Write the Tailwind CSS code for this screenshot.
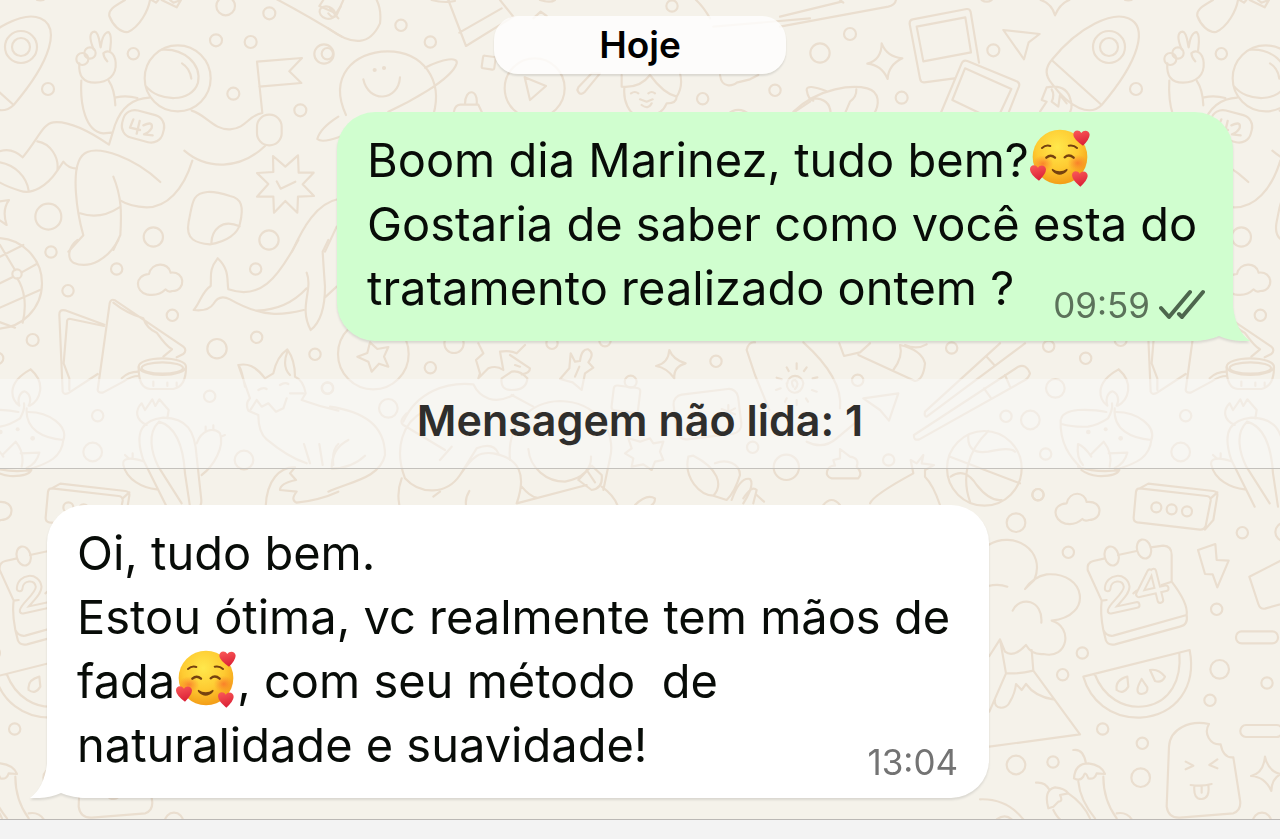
<!DOCTYPE html>
<html lang="pt-BR">
<head>
<meta charset="utf-8">
<meta name="viewport" content="width=device-width, initial-scale=1">
<title>Conversa</title>
<script src="https://cdn.jsdelivr.net/npm/@tailwindcss/browser@4"></script>
</head>
<body class="bg-[#f5f2ea] font-['Inter',sans-serif] text-[#080c08]">
<div class="relative isolate flex min-h-screen flex-col overflow-hidden">

<!-- Doodle wallpaper; the tile repeats every 1088 units -->
<svg class="absolute inset-0 -z-10 h-full w-full" viewBox="0 0 1280 839" preserveAspectRatio="xMidYMid slice" fill="none" stroke="#eadecf" stroke-width="6.5" stroke-linecap="round" stroke-linejoin="round" aria-hidden="true">
<defs>
<g id="tile">
<!-- astronaut, flag, badge -->
<g transform="scale(.33333)">
<path d="M375 0C340 20 325 30 328 48C338 75 360 98 384 96C420 80 445 30 450 0M455 0L468 8L475 0M485 0L530 22L543 0L520 8L510 0"/>
<circle cx="677" cy="18" r="28"/><circle cx="808" cy="40" r="18"/><circle cx="648" cy="121" r="18"/><circle cx="752" cy="126" r="18"/><circle cx="972" cy="162" r="29"/><circle cx="400" cy="161" r="17"/><circle cx="700" cy="281" r="18"/><circle cx="901" cy="331" r="18"/><circle cx="145" cy="650" r="39"/><circle cx="460" cy="711" r="29"/><circle cx="807" cy="720" r="29"/><circle cx="144" cy="267" r="18"/>
<path d="M825-5Q920 45 1025 110M958 18L1008 40M970 0L958 18M1008 40L1022 20"/><ellipse cx="982" cy="38" rx="24" ry="18" transform="rotate(20 982 38)"/>
<path d="M281 148C268 118 267 96 284 95C298 98 298 130 302 142C305 120 310 97 326 96C338 108 332 135 330 152M310 160C325 145 345 160 347 188C350 225 325 248 285 248C250 248 235 228 238 190M310 160Q312 175 322 184"/><circle cx="247" cy="177" r="18"/><circle cx="270" cy="159" r="17"/>
<path d="M244 242C240 310 255 395 310 400L334 398M326 242Q344 268 346 316M348 292Q380 285 412 294M448 293C400 295 365 320 345 375L327 434C270 395 205 362 160 367C130 370 115 415 68 472Q35 440-5 455"/>
<circle cx="533" cy="235" r="99"/><path d="M487 149C550 145 605 190 594 248C575 310 475 305 439 260M546 190Q570 205 574 236"/>
<rect x="366" y="337" width="126" height="84" rx="36" transform="rotate(15 429 379)"/>
<path stroke-width="7" d="M400 358L390 383L420 390M419 363L410 401M430 376Q460 362 455 384Q448 397 432 403L458 406"/>
<path d="M575 332C620 345 640 390 690 388C740 385 745 345 787 339M787 339L771 185L906 174L868 214L904 249L778 260"/><rect x="771" y="344" width="74" height="92" rx="36"/>
<path d="M795 438C720 510 620 510 553 452M577 482C550 570 500 622 440 622Q390 620 362 602M481 546C400 470 300 440 262 456C225 470 225 540 228 580C232 640 240 670 250 706L205 755M340 530C365 590 365 640 361 705L340 750M240 640Q300 660 358 622"/>
<path d="M112 424C150 430 178 470 172 512L190 485Q205 505 230 506M172 512C140 560 95 585 60 572Q20 560-5 545M0 487C45 495 80 530 86 572M-5 605L27 600Q5 630 20 675L-5 658"/>
<path d="M819 468L856 500L894 466L896 518L941 518L908 553L942 588L894 590L892 638L856 603L822 638L820 590L771 590L805 552L771 519L820 516ZM830 544L842 566L886 545"/>
<path d="M622 576C575 580 578 610 566 665C555 720 590 730 630 733C680 725 715 700 720 670C732 620 725 595 690 588C665 580 645 574 622 576ZM634 730C635 690 665 655 719 679"/>
<path d="M1015 350Q960 385 952 417Q965 430 1020 410M876 755C910 680 950 610 1015 597M975 755L1010 680"/>
</g>
<!-- ball, sandwich, cloud, whale, candle, cactus, fox -->
<g transform="translate(0 240) scale(.33333)">
<circle cx="-10" cy="130" r="136"/><path d="M0 15L45 90M0 50L70 15M65 97L110 72M0 130L40 110M52 115C75 150 80 200 68 248M-5 205L120 150M-5 245L45 263"/><circle cx="51" cy="102" r="14"/>
<circle cx="153" cy="36" r="17"/><circle cx="204" cy="152" r="17"/><circle cx="98" cy="300" r="18"/><circle cx="350" cy="87" r="17"/><circle cx="517" cy="226" r="17"/><circle cx="651" cy="326" r="29"/><circle cx="770" cy="292" r="17"/><circle cx="767" cy="87" r="17"/><circle cx="945" cy="343" r="17"/><circle cx="983" cy="444" r="17"/><circle cx="629" cy="469" r="17"/><circle cx="293" cy="527" r="17"/><circle cx="278" cy="636" r="28"/><circle cx="732" cy="660" r="28"/>
<path d="M232 0C205 20 200 55 220 68C270 90 325 55 355 0"/>
<path d="M440 163C405 155 403 105 447 102C455 65 505 65 512 98C555 92 560 152 517 153Q505 158 497 148Q475 170 440 163Z"/>
<path d="M313 254L195 211Q177 207 178 225L188 455Q192 465 204 460L293 402M312 258L212 237Q200 235 201 248L191 370L208 415V450M293 450L329 190Q332 175 345 181L550 320Q562 330 550 342L530 352M340 188Q380 220 430 235Q440 265 470 278Q500 320 516 328L490 350M293 450Q295 460 310 457L370 425Q395 408 415 408M365 415Q385 395 415 395"/>
<ellipse cx="487" cy="380" rx="71" ry="25"/><ellipse cx="487" cy="384" rx="62" ry="17"/><path d="M416 382Q415 445 450 447H520Q558 440 558 382M460 425V438M502 428V438M530 428V438"/>
<path d="M653 55C625 90 635 110 632 138C605 155 600 190 581 210Q625 215 640 192C655 165 675 170 690 178C790 235 850 225 911 210M653 55C690 90 680 120 685 148C780 180 830 120 895 0M770 212Q860 210 920 145M920 98C940 150 895 200 932 270C970 240 975 180 975 140Q970 70 968 35L985 0M975 172L1010 140"/>
<path d="M92 388C140 430 120 480 90 497M92 388C15 430 35 480 58 497M58 497C50 470 65 455 73 454C90 460 95 480 86 497M72 490Q75 510 60 535Q30 555 0 560Q-45 562-80 552M-80 535Q-75 515-30 510Q20 508 55 516M80 505C75 570 130 595 190 600C205 560 150 515 82 516M190 600C185 650 150 670 80 690M-82 540C-85 610-55 650-20 685M7 645L47 605Q75 640 65 680M62 640L118 638Q110 670 80 684M-30 612Q-10 620 10 650M-30 612Q-35 655-15 675M-30 680Q30 700 94 690Q85 710 30 708Q0 705-20 690"/>
<g fill="#eadecf" stroke="none"><circle cx="53" cy="568" r="6"/><circle cx="98" cy="595" r="7"/><circle cx="1" cy="576" r="7"/></g>
<path d="M440 555C405 540 405 510 425 490L435 510L457 478L466 498L478 478L506 510L502 535M500 800L430 660C400 570 430 540 490 533C560 535 585 570 590 650L604 780Q605 795 595 805M477 545C440 580 455 640 475 680L545 790M477 545C530 560 550 620 555 700L570 800M590 610C605 570 640 560 660 580C675 620 640 680 605 705M617 572V560M640 568V556M662 590L675 585M470 748C430 745 380 720 370 675C365 655 390 650 430 664M386 655L375 645M398 653V640"/>
<path d="M775 525L745 512Q735 490 750 475L715 375C740 370 765 375 795 415L820 400Q830 350 862 328Q885 360 885 410Q910 420 917 460L905 480Q960 500 1015 512M735 440Q725 390 718 380M870 405Q845 380 862 335M750 512L770 480L785 500L805 490L828 515L850 505L860 475M775 450Q790 440 800 447M840 435Q855 425 865 432M870 460H910M775 525C775 570 790 590 800 598C850 640 890 660 920 670M912 612L930 670M958 612L968 675M1015 612Q995 630 1000 675M797 800C800 720 840 680 885 682L870 700L888 720Q840 730 840 750L890 755Q870 780 890 788Q960 780 1015 755"/>
</g>
<!-- hand, hat, planet, record, face -->
<g transform="translate(330) scale(.33333)">
<path d="M0 25L25 55M-5 40Q10 60 20 45L40 0M-5 85C70 140 120 135 150 70Q155 30 140 0M355 0L408 138L550 50L510 0M388 98L515 25M305 0Q340 10 375 3M630 0Q660 10 675 0M1098 0Q1120 20 1140 55M610 55L632 35L650 48"/>
<circle cx="213" cy="76" r="17"/><circle cx="301" cy="126" r="17"/><circle cx="1026" cy="18" r="17"/><circle cx="1118" cy="296" r="17"/><circle cx="1335" cy="271" r="17"/><circle cx="-8" cy="161" r="17"/>
<path d="M48 345C-5 230 70 155 173 154C280 155 340 240 310 345M285 203C340 175 385 170 380 190C365 240 230 310 175 335M100 238C115 310 205 305 210 232"/><circle cx="134" cy="210" r="3"/><circle cx="162" cy="204" r="3"/>
<rect x="457" y="169" width="38" height="38" rx="5" transform="rotate(8 476 188)"/><circle cx="614" cy="265" r="90"/><path d="M584 232L648 258L600 300ZM745 262L785 220H810L765 275Q750 290 742 270ZM372 335Q375 315 390 314H445L455 335M405 312C405 265 445 265 440 312"/>
<path d="M875 225V260Q930 265 960 225Q1000 280 1040 290Q1040 310 1010 310Q995 345 960 345M1040 290Q1060 260 1050 220M883 265C880 300 895 345 930 350M903 280Q915 272 925 280M955 280Q965 272 975 280M930 298L950 305L968 298M935 315Q955 330 965 310M1170 225C1175 270 1215 255 1220 248L1260 238L1285 225M1190 345Q1225 315 1260 345M1395 335L1440 305M1150 80L1440 55"/>
</g>
<!-- polaroids, plane, rocket -->
<g transform="translate(780) scale(.33333)">
<path d="M0 50L185 5M0 80L325 20Q345 15 348 0M180 0L190 8M605 0Q620 10 635 0M782 0Q815 10 825 46Q840 10 868 0M1035 0Q1045 2 1055 0"/>
<circle cx="120" cy="159" r="29"/><circle cx="210" cy="102" r="18"/><circle cx="365" cy="293" r="18"/><circle cx="640" cy="151" r="18"/>
<path d="M305 130Q320 170 367 175Q325 195 323 237Q305 195 262 191Q305 180 305 130ZM398 58L560 27Q570 26 572 36L597 188M523 235L433 247Q422 248 420 236L389 72Q388 60 398 58M410 80L556 52L573 157L430 184ZM480 345L545 190Q550 178 562 183L708 243Q721 248 717 259L685 340M555 205L694 267L660 340M555 205L517 300L600 340"/>
<path d="M670 90L779 102L746 127L732 178Z"/>
<path d="M40 335C120 260 220 255 262 265C300 275 300 315 280 345M80 270Q80 250 140 274M80 270Q85 300 100 302M100 295Q150 295 152 340M229 268Q230 290 210 305L195 340"/>
<path d="M815 180C900 75 1000 35 1045 55C1105 80 1080 180 965 315C930 350 870 325 815 250Q785 215 815 180ZM815 180L965 315M800 262L785 300L800 305L780 335M800 262Q860 250 872 300Q880 325 865 345M815 268Q825 285 815 305L835 320L840 285L860 310"/><circle cx="987" cy="141" r="48"/><circle cx="987" cy="141" r="27"/>
</g>
<!-- star, horse, smiling ball, shell, sun card -->
<g transform="translate(330 335) scale(.33333)">
<circle cx="130" cy="57" r="106"/><path d="M120 22L142 42L175 36L162 65L175 95L147 86L125 110L115 80L82 65L112 54Z"/>
<circle cx="301" cy="98" r="17"/><circle cx="372" cy="25" r="29"/><circle cx="175" cy="220" r="28"/><circle cx="666" cy="25" r="17"/><circle cx="825" cy="17" r="17"/><circle cx="1158" cy="79" r="17"/><circle cx="1268" cy="337" r="17"/><circle cx="1369" cy="397" r="38"/><circle cx="-8" cy="160" r="17"/>
<path d="M445 25L460 55L438 75L450 115L445 130L475 100Q500 90 520 105L510 50Q540 45 560 55L585 30M540 60L600 100Q600 115 575 118M555 90L570 95M515 130Q510 165 545 165Q590 165 592 130Q570 105 545 110ZM220 260C260 170 350 140 430 148M430 148C450 190 495 210 550 180M545 180L610 215"/>
<path d="M722 55L735 80L750 78Q755 40 775 43Q795 55 775 82L790 98L765 115L755 165L728 142L690 132L718 100ZM735 125L748 95M1018 45Q1030 75 1067 85Q1030 95 1033 130Q1010 98 978 93Q1015 85 1018 45Z"/>
<rect x="848" y="155" width="80" height="75" rx="10" transform="rotate(7 888 190)"/><circle cx="902" cy="140" r="18"/><rect x="1035" y="170" width="195" height="135" rx="28" transform="rotate(-7 1132 238)"/><path d="M1195 210V250M1175 222L1215 238M1215 220L1175 242"/>
<path d="M0 215C100 230 165 270 165 360C150 430 60 440-5 470M5 400Q5 340 55 315M5 400Q65 400 105 362M230 235Q205 260 220 270L345 345M330 375L365 335M225 430C190 340 220 260 280 230M215 430Q200 470 208 510M225 430C270 480 350 480 390 420C430 360 450 350 490 355C570 370 590 420 560 505M390 420L440 340Q490 320 505 355M310 485L330 470M418 468Q405 490 408 510M575 455Q600 485 620 488M560 505L770 450M815 455Q850 480 862 510"/>
<path d="M540 375C530 270 600 200 690 198C800 200 860 290 840 370L820 465M595 342C600 400 650 440 705 440C760 430 785 400 783 365M745 435L785 392L815 420Q820 460 785 465ZM770 405L795 442"/>
<path d="M885 355L905 340L895 310L930 320L960 310L970 325L1000 320L990 350L1000 375L975 380L965 405L940 388L905 395L910 370ZM1075 365C1060 430 1110 480 1150 482C1180 450 1165 400 1090 362ZM1155 385C1190 370 1230 385 1230 420Q1215 470 1190 495L1150 482M1205 495Q1230 425 1260 432Q1275 450 1240 505M1240 490Q1265 450 1280 465L1270 505M1280 480L1302 500M915 510Q950 475 975 490Q975 505 965 510"/>
<path d="M1250 45Q1255 20 1275 22M1250 45L1275 120L1318 225M1372 145C1375 115 1415 115 1420 145C1415 185 1370 180 1370 145M1390 155Q1380 135 1395 135Q1410 145 1395 162M1400 85V102M1370 97L1376 108M1430 97L1422 108M1340 128L1355 133M1338 165L1352 160M1365 200L1370 190M1400 210V195M1448 130L1462 127M1446 165L1460 170M1434 200L1428 190"/>
</g>
<!-- chopsticks, arrow, basketball, stickman -->
<g transform="translate(780 335) scale(.33333)">
<path d="M70 22Q190 130 180 220M178 25L192 63L240 52L270 25M235 60L405 138Q430 135 435 85Q425 45 360 30M340 105Q370 65 360 30M375 30Q410 45 440 28"/>
<circle cx="233" cy="136" r="17"/><circle cx="515" cy="39" r="17"/><circle cx="806" cy="34" r="17"/><circle cx="917" cy="70" r="17"/><circle cx="826" cy="160" r="28"/><circle cx="751" cy="255" r="28"/><circle cx="678" cy="244" r="17"/><circle cx="797" cy="357" r="17"/><circle cx="326" cy="375" r="17"/><circle cx="774" cy="479" r="17"/>
<path d="M435 230L660 25M440 245L735 25M435 230Q432 245 440 245M620 65L645 92M402 300L715 95Q738 85 750 115Q745 130 735 135L418 313Q400 318 402 300M612 160L632 188M675 120L690 155M250 190L355 175L327 257L300 225Z"/>
<circle cx="613" cy="400" r="112"/><path d="M510 365L720 445M625 288C560 350 545 430 570 500M565 300Q560 360 625 350Q690 335 705 350M512 425Q555 395 590 450Q630 500 665 495"/>
<path d="M155 430C130 425 140 390 165 392L160 375L180 370V342L210 365Q240 370 230 395Q250 415 235 430ZM270 505Q280 480 400 415L392 375L410 385L430 360L425 385L462 390L435 405V425Q460 450 480 510M130 510Q155 480 180 510M80 320Q130 345 170 310L230 260"/>
</g>
<!-- speech box, volcano, calendar, melon, popsicle, chillies -->
<g transform="translate(980 480) scale(.33333)">
<circle cx="174" cy="44" r="17"/><circle cx="108" cy="128" r="28"/><circle cx="265" cy="217" r="17"/><circle cx="307" cy="519" r="17"/><circle cx="248" cy="584" r="17"/><circle cx="368" cy="747" r="17"/><circle cx="487" cy="790" r="17"/><circle cx="482" cy="893" r="28"/><circle cx="219" cy="846" r="17"/><circle cx="108" cy="855" r="28"/><circle cx="787" cy="158" r="17"/><circle cx="914" cy="156" r="28"/><circle cx="710" cy="388" r="17"/><circle cx="719" cy="568" r="28"/><circle cx="690" cy="661" r="17"/><circle cx="861" cy="609" r="17"/><circle cx="846" cy="1026" r="28"/>
<path d="M256 131C217 120 215 72 260 70C270 30 315 35 320 66C370 60 370 120 327 120Q315 125 307 117Q285 137 256 131ZM479 25L680 48Q693 50 692 62L677 138Q672 150 660 149L472 127Q460 125 461 112L468 35Q470 25 479 25L505 11L700 33Q714 35 712 47L700 120L675 149M692 55L712 37"/>
<circle cx="529" cy="82" r="15"/><circle cx="575" cy="88" r="15"/><circle cx="621" cy="94" r="15"/>
<path d="M25 195C100 150 200 210 163 300L135 327Q160 290 200 283C320 275 340 410 215 422C280 440 265 540 190 522Q155 525 138 495Q100 535 75 515L60 478L28 528M25 318Q55 310 82 320M98 392C120 345 190 360 184 428M60 478L78 580Q120 582 160 572L155 510M78 580L28 695M160 572L300 763L28 800M45 660C40 690 80 690 90 665Q105 640 108 612L125 630L138 612Q165 650 220 658"/>
<path d="M375 235L340 243Q320 248 323 270L365 362M414 225L470 213M512 202L550 197Q575 198 575 225V305Q625 370 620 405L400 467Q380 470 370 450Q360 400 365 362L380 360M460 340L470 332M545 315L575 305M370 450L378 482Q385 497 405 493L600 440Q625 435 620 405"/><ellipse cx="395" cy="228" rx="21" ry="29" transform="rotate(-15 395 228)"/><ellipse cx="492" cy="207" rx="21" ry="29" transform="rotate(-15 492 207)"/>
<path stroke-width="23" d="M383 325C385 290 435 285 440 320C440 345 395 375 392 392L470 375M510 277L477 343L557 325M520 275L541 360"/>
<path stroke="#f5f2ea" stroke-width="11" d="M383 325C385 290 435 285 440 320C440 345 395 375 392 392L470 375M510 277L477 343L557 325M520 275L541 360"/>
<path d="M310 590L629 510C650 620 590 705 480 713C390 715 330 660 310 590ZM344 582C370 650 430 690 500 678C570 665 605 600 598 520M442 590Q405 600 410 630Q430 645 445 620ZM485 597Q460 640 485 642Q505 640 502 622ZM510 570Q535 565 555 590Q545 610 525 603Z"/>
<path d="M654 210L706 192L710 240L746 242L712 322L698 283L675 282ZM808 290L910 238L980 350L855 386Q840 388 835 372Z"/><rect x="768" y="454" width="126" height="36" rx="17"/><rect x="781" y="735" width="126" height="36" rx="17"/>
<path d="M687 732C630 720 570 745 567 800L560 980Q565 1015 600 1013L760 1000Q785 990 780 960L760 832Q730 835 722 793C690 795 670 760 687 732ZM617 845L640 857L617 868M712 838L688 855L712 865M632 915Q665 920 695 912M643 918Q640 958 665 957Q690 955 685 916M665 920V938M855 830Q865 875 903 882Q875 895 874 933Q855 890 813 888Q850 880 855 830Z"/>
<path d="M280 810Q310 805 318 850M282 895Q285 850 325 850Q365 855 375 882L350 880Q345 900 325 895Q315 870 310 890Q300 905 282 895M295 905Q300 960 345 1015M370 890Q370 960 410 1015M168 908Q195 905 207 928M205 985Q190 930 225 922Q255 925 265 940L240 945Q250 965 235 965L220 980ZM220 990Q230 1010 240 1018M265 940Q310 970 330 1015M410 1000Q440 995 455 1018M0 958Q80 955 130 1018M50 1018Q75 1000 95 1018"/>
</g>
</g>
</defs>
<use href="#tile"/><use href="#tile" x="-1088"/><use href="#tile" x="1088"/>
</svg>

<!-- Reusable face with three hearts -->
<svg class="absolute h-0 w-0" aria-hidden="true"><defs>
<radialGradient id="skin" cx=".45" cy=".32" r=".7"><stop offset="0" stop-color="#ffe84c"/><stop offset=".55" stop-color="#fecb32"/><stop offset="1" stop-color="#f39a15"/></radialGradient>
<radialGradient id="blush"><stop offset="0" stop-color="#f9602a" stop-opacity=".65"/><stop offset="1" stop-color="#f9702a" stop-opacity="0"/></radialGradient>
<linearGradient id="red" x2=".3" y2="1"><stop offset="0" stop-color="#fb5a58"/><stop offset="1" stop-color="#dc2338"/></linearGradient>
<symbol id="loved" viewBox="24 30 186 180">
<circle cx="117" cy="117" r="82" fill="url(#skin)"/>
<ellipse cx="66" cy="137" rx="31" ry="25" fill="url(#blush)"/><ellipse cx="170" cy="135" rx="30" ry="25" fill="url(#blush)"/>
<g fill="none" stroke="#76420f" stroke-width="6" stroke-linecap="round"><path d="M63 90Q74 80 88 84M143 83Q158 80 168 90"/><path stroke-width="7" d="M76 119Q89 107 102 119M131 118Q144 107 158 119"/></g>
<path d="M94 152Q116 167 138 152Q142 154 138 159Q116 182 94 159Q90 154 94 152Z" fill="#76420f"/>
<g fill="url(#red)"><path d="M186 83Q158 64 157 51C156 36 174 33 181 45C188 34 205 37 206 50Q205 64 186 83Z"/><path d="M54 188Q28 169 27 155C26 140 43 137 51 149C57 138 74 141 75 154Q75 168 54 188Z"/><path d="M178 206Q154 187 153 172C153 158 170 156 176 167C184 156 200 160 200 174Q199 187 178 206Z"/></g>
</symbol>
</defs></svg>

<main class="flex flex-1 flex-col pt-4">
  <time class="mx-auto flex h-[58px] w-[292px] items-center justify-center rounded-3xl bg-white/80 text-[37px] font-semibold text-black shadow-[0_2px_2px_#0000001c]">Hoje</time>

  <article class="relative mt-[38px] mr-[47px] w-[70%] self-end rounded-[38px] bg-[#d0fecf] px-[30px] pt-4 pb-[21px] drop-shadow-[0_2px_1px_#0000001c]">
    <svg class="absolute -right-[17px] bottom-0 h-[60px] w-[60px]" viewBox="0 0 60 60" aria-hidden="true"><path d="M43 0V26Q46 50 60 60Q43 61 29 55Q18 60 0 60V0Z" fill="#d0fecf"/></svg>
    <p class="relative text-[47px] leading-[64px] whitespace-nowrap">Boom dia Marinez, tudo bem?<svg class="inline-block h-[60px] w-[62px] align-[-11px]" role="img" aria-label="Rosto sorridente com corações"><use href="#loved"/></svg><br>Gostaria de saber como você esta do<br>tratamento realizado ontem ?</p>
    <div class="absolute right-7 bottom-3 flex items-center gap-[9px] text-[35px] leading-12 text-[#5b725a]"><time>09:59</time>
      <svg class="h-8 w-[46px]" viewBox="0 0 46 32" fill="none" stroke="#4d664d" stroke-width="4" stroke-linecap="round" stroke-linejoin="round" role="img" aria-label="Entregue"><path d="M2 19L10 28L31 3M20 25L23 28L44 3"/></svg></div>
  </article>

  <div class="mt-[38px] flex h-[90px] items-center justify-center border-b border-[#c4c1bc] bg-[#fafafa]/50 pb-1.5 text-[43px] font-semibold text-[#2f2e2c]" role="separator">Mensagem não lida: 1</div>

  <article class="relative mt-9 ml-[47px] w-[73.6%] rounded-[38px] bg-white px-[30px] pt-4 pb-[21px] drop-shadow-[0_2px_1px_#0000001c]">
    <svg class="absolute bottom-0 -left-[17px] h-[60px] w-[60px]" viewBox="0 0 60 60" aria-hidden="true"><path d="M17 0V26Q14 50 0 60Q17 61 31 55Q42 60 60 60V0Z" fill="#fff"/></svg>
    <p class="relative text-[47px] leading-[64px] whitespace-nowrap">Oi, tudo bem.<br>Estou ótima, vc realmente tem mãos de<br>fada<svg class="inline-block h-[60px] w-[62px] align-[-11px]" role="img" aria-label="Rosto sorridente com corações"><use href="#loved"/></svg>, com seu método&nbsp; de<br>naturalidade e suavidade!</p>
    <time class="absolute right-[31px] bottom-3 text-[35px] leading-12 text-[#737373]">13:04</time>
  </article>
</main>
<footer class="h-5 border-t border-[#bbb8b5] bg-[#f3f3f3]"></footer>
</div>
</body>
</html>
